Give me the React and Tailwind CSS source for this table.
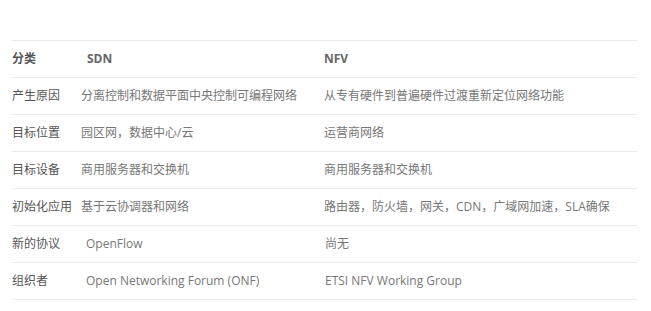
const rows = [
  { label: "产生原因", sdn: "分离控制和数据平面中央控制可编程网络", nfv: "从专有硬件到普遍硬件过渡重新定位网络功能" },
  { label: "目标位置", sdn: "园区网，数据中心/云", nfv: "运营商网络" },
  { label: "目标设备", sdn: "商用服务器和交换机", nfv: "商用服务器和交换机" },
  { label: "初始化应用", sdn: "基于云协调器和网络", nfv: "路由器，防火墙，网关，CDN，广域网加速，SLA确保" },
  { label: "新的协议", sdn: "OpenFlow", nfv: "尚无", latin: true },
  { label: "组织者", sdn: "Open Networking Forum (ONF)", nfv: "ETSI NFV Working Group", latin: true },
];

const App = () => {
  return (
    <div
      className="w-[651px] h-[311px] bg-white pt-[40px] px-[12px]"
      style={{ fontFamily: '"Open Sans", "Noto Sans CJK SC", sans-serif' }}
    >
      <div className="w-[625px] border-t border-[#ebebeb] text-[12px]">
        <div className="grid grid-cols-[69px_243px_1fr] h-[37px] items-center border-b border-[#ebebeb]">
          <div className="font-bold text-[#555]">分类</div>
          <div className="pl-[6px] font-bold text-[#666]">SDN</div>
          <div className="font-bold text-[#666]">NFV</div>
        </div>
        {rows.map((r) => (
          <div
            key={r.label}
            className="grid grid-cols-[69px_243px_1fr] h-[37px] items-center border-b border-[#ebebeb]"
          >
            <div className="text-[#555] whitespace-nowrap">{r.label}</div>
            <div className={`text-[#777] whitespace-nowrap ${r.latin ? "pl-[5px]" : ""}`}>
              {r.sdn}
            </div>
            <div className={`text-[#777] whitespace-nowrap ${r.latin ? "pl-[1px]" : ""}`}>
              {r.nfv}
            </div>
          </div>
        ))}
      </div>
    </div>
  );
};

export default App;
